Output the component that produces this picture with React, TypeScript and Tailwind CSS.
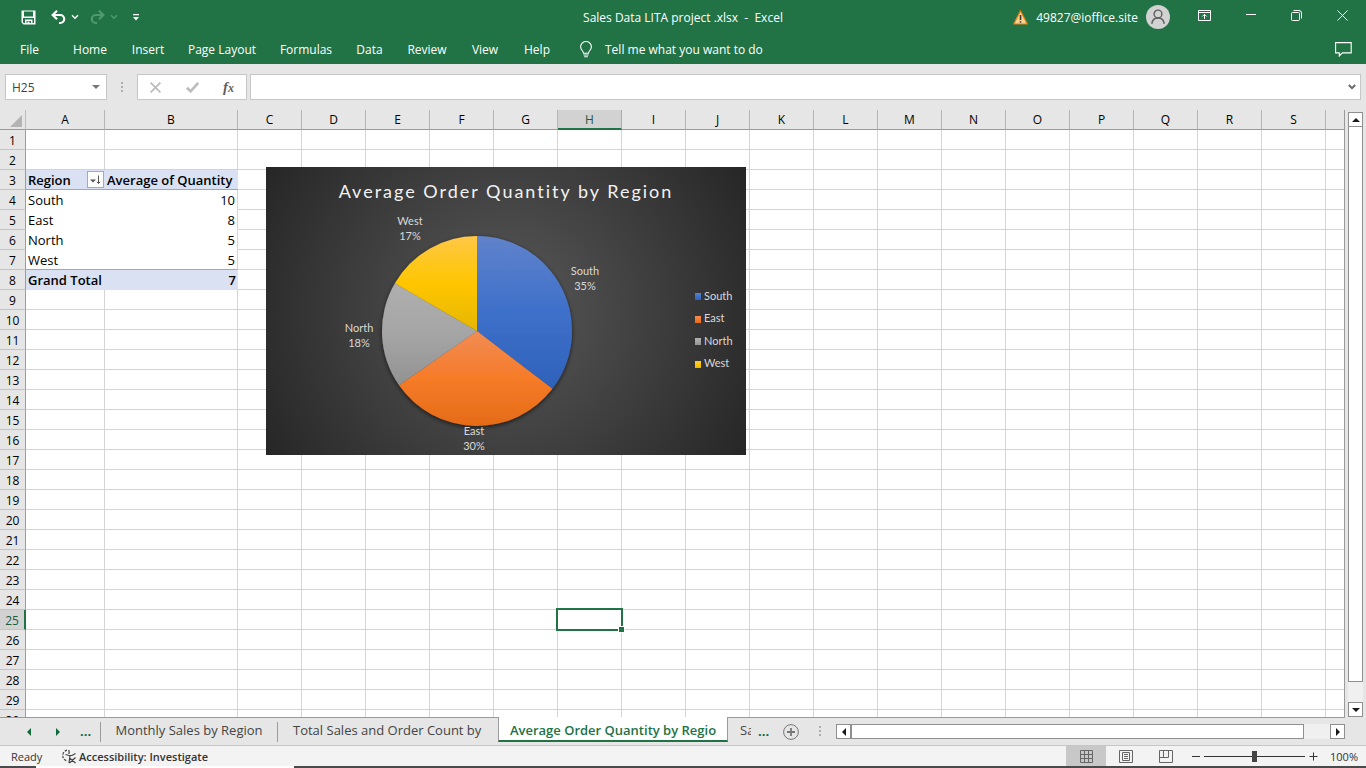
import React, { useEffect, useState } from "react";

const LETTERS = "ABCDEFGHIJKLMNOPQRSTUVWXYZ".split("");
const SELECTED = { col: "H", row: 25 };

const PIVOT: Record<number, [string, string]> = {
  3: ["Region", "Average of Quantity"],
  4: ["South", "10"],
  5: ["East", "8"],
  6: ["North", "5"],
  7: ["West", "5"],
  8: ["Grand Total", "7"],
};

const MENU = [
  { name: "Home", width: "w-[60px]" },
  { name: "Insert", width: "w-[56px]" },
  { name: "Page Layout", width: "w-[92px]" },
  { name: "Formulas", width: "w-[76px]" },
  { name: "Data", width: "w-[51px]" },
  { name: "Review", width: "w-[64px]" },
  { name: "View", width: "w-[52px]" },
  { name: "Help", width: "w-[52px]" },
];

/** Number of rows and columns needed to fill the window. */
function useVisibleCells() {
  const measure = () => ({
    rows: Math.max(1, Math.ceil((window.innerHeight - 181) / 20)),
    cols: Math.max(2, 2 + Math.ceil((window.innerWidth - 260) / 64)),
  });
  const [cells, setCells] = useState(measure);
  useEffect(() => {
    const update = () => setCells(measure());
    window.addEventListener("resize", update);
    return () => window.removeEventListener("resize", update);
  }, []);
  return cells;
}

function columnName(i: number) {
  return i < 26 ? LETTERS[i] : LETTERS[Math.floor(i / 26) - 1] + LETTERS[i % 26];
}

function Chevron({ className = "" }: { className?: string }) {
  return (
    <svg width="8" height="6" viewBox="0 0 8 6" fill="none" stroke="currentColor" strokeWidth="1.4" className={className}>
      <path d="M1 1.3 4 4.2 7 1.3" />
    </svg>
  );
}

function TitleBar() {
  return (
    <header className="grid h-[34px] grid-cols-[1fr_auto_1fr] items-center text-white">
      <div className="flex h-full items-center pl-[21px]">
        <button aria-label="Save" className="mr-[15px]">
          <svg width="15" height="15" viewBox="0 0 15 15" fill="#fff" fillRule="evenodd">
            <path d="M.5.500h14v14h-12l-2-2zM3 1.500v5h9v-5zM2 8v4.500l.8.500H4V9.500h7.500V13H13V8zM5.500 11v2h1v-1.500h2V13H10v-2z" />
          </svg>
        </button>
        <button aria-label="Undo">
          <svg width="15" height="15" viewBox="0 0 15 15" fill="none" stroke="#fff" strokeWidth="2.200">
            <path d="M6 .8 1.700 5 6 9.200" />
            <path d="M2 5h7.200a3.900 3.900 0 0 1 0 8H8" />
          </svg>
        </button>
        <button aria-label="Undo history" className="ml-[5px]"><Chevron /></button>
        <button aria-label="Redo" className="ml-[11px] text-[#4f9a6e]">
          <svg width="15" height="15" viewBox="0 0 15 15" fill="none" stroke="currentColor" strokeWidth="2.200">
            <path d="M9 .8 13.300 5 9 9.200" />
            <path d="M13 5H5.800a3.900 3.900 0 0 0 0 8H7" />
          </svg>
        </button>
        <button aria-label="Redo history" className="ml-[5px] text-[#4f9a6e]"><Chevron /></button>
        <button aria-label="Customize Quick Access Toolbar" className="ml-[15px]">
          <svg width="6" height="7" viewBox="0 0 6 7" fill="#fff">
            <path d="M0 0h6v1.200H0zM0 3h6L3 6.400z" />
          </svg>
        </button>
      </div>
      <h1 className="pt-[2px] text-[12px] leading-4 whitespace-pre">Sales Data LITA project .xlsx  -  Excel</h1>
      <div className="flex h-full items-center justify-end pr-[18px]">
        <svg width="15" height="15" viewBox="0 0 15 15" className="mr-2">
          <path d="M7.500.8 14.300 14H.7z" fill="#fbd38a" stroke="#e07b14" strokeWidth="1.200" />
          <path d="M7.500 5v5M7.500 11.200v1.600" stroke="#3a3a3a" strokeWidth="1.600" />
        </svg>
        <span className="mr-2 pt-[2px] text-[12px] leading-4">49827@ioffice.site</span>
        <button aria-label="Account" className="mr-[28px] rounded-full bg-[#d2d2d2]">
          <svg width="24" height="24" viewBox="0 0 24 24" fill="none" stroke="#5f5f5f" strokeWidth="1.400">
            <circle cx="12" cy="9" r="3.900" />
            <path d="M5.800 18.800c.4-3.600 2.600-5.800 6.200-5.800s5.800 2.200 6.200 5.800" />
          </svg>
        </button>
        <button aria-label="Ribbon Display Options" className="mr-[35px] -mt-1">
          <svg width="13" height="11" viewBox="0 0 13 11" fill="none" stroke="#fff">
            <path d="M.5.500h12v10H.500zM.5 2.500h12M6.500 9V4.500M4.300 6.500l2.200-2.200 2.200 2.200" />
          </svg>
        </button>
        <button aria-label="Minimize" className="mr-[35px] -mt-1">
          <svg width="10" height="10" viewBox="0 0 10 10" stroke="#fff"><path d="M0 4.500h10" /></svg>
        </button>
        <button aria-label="Restore" className="mr-[35px] -mt-1">
          <svg width="11" height="11" viewBox="0 0 11 11" fill="none" stroke="#fff">
            <rect x=".5" y="2.500" width="8" height="8" rx="1" />
            <path d="M2.500.500H8a2.500 2.500 0 0 1 2.500 2.500v5.500" />
          </svg>
        </button>
        <button aria-label="Close" className="-mt-1">
          <svg width="11" height="11" viewBox="0 0 11 11" stroke="#fff"><path d="M.5.500l10 10M10.500.500l-10 10" /></svg>
        </button>
      </div>
    </header>
  );
}

function MenuBar() {
  return (
    <nav className="flex h-[30px] items-center pr-[14px] pl-px text-[12px] leading-4 text-white">
      <button className="w-[57px] pt-px">File</button>
      <div className="w-[2px]" />
      {MENU.map((m) => (
        <button key={m.name} className={`${m.width} pt-px whitespace-nowrap`}>{m.name}</button>
      ))}
      <button className="ml-[17px] flex items-center gap-[13px]">
        <svg width="12" height="17" viewBox="0 0 12 17" fill="none" stroke="#fff" strokeWidth="1.100">
          <path d="M3.500 12.300C3.500 9.800.6 9 .6 5.700a5.300 5.100 0 0 1 10.800 0C11.400 9 8.500 9.800 8.500 12.300zM3.500 14h5M4.200 15.800h3.600" />
        </svg>
        <span className="pt-px">Tell me what you want to do</span>
      </button>
      <button aria-label="Comments" className="ml-auto">
        <svg width="17" height="15" viewBox="0 0 17 15" fill="none" stroke="#fff" strokeWidth="1.100">
          <path d="M.6.600h15.600v10.300H7.400L4.300 14v-3.100H.600z" />
        </svg>
      </button>
    </nav>
  );
}

function Dots() {
  return (
    <svg width="2" height="11" viewBox="0 0 2 11" fill="#adadad">
      <path d="M0 0h2v2H0zM0 4h2v2H0zM0 8h2v2H0z" />
    </svg>
  );
}

function FormulaBar() {
  return (
    <div className="flex h-[46px] items-center pr-[5px] pl-[5px]">
      <div className="flex h-[26px] w-[102px] items-center border border-[#c6c6c6] bg-white pr-[6px]">
        <input aria-label="Name Box" defaultValue="H25" className="w-0 flex-1 bg-transparent pt-px pl-[6px] text-[12px] text-[#444] outline-none" />
        <button aria-label="Open name list">
          <svg width="8" height="4" viewBox="0 0 8 4" fill="#777"><path d="M0 0h8L4 4z" /></svg>
        </button>
      </div>
      <div className="mx-[14px]"><Dots /></div>
      <div className="flex h-[26px] w-[110px] items-center justify-between border border-[#c6c6c6] bg-white pr-[12px] pl-[12px]">
        <button aria-label="Cancel">
          <svg width="11" height="11" viewBox="0 0 11 11" stroke="#bcbcbc" strokeWidth="1.800"><path d="M.6.600l9.800 9.800M10.400.600.600 10.400" /></svg>
        </button>
        <button aria-label="Enter">
          <svg width="13" height="11" viewBox="0 0 13 11" fill="none" stroke="#bcbcbc" strokeWidth="2.600"><path d="M.9 5.800 4.600 9.300 12.200 1" /></svg>
        </button>
        <button aria-label="Insert Function" className="font-['Liberation_Serif',serif] text-[15px] leading-4 font-bold text-[#5f5f5f] italic">
          f<span className="text-[12px]">x</span>
        </button>
      </div>
      <div className="ml-[3px] flex h-[26px] flex-1 items-center border border-[#c6c6c6] bg-white pr-1">
        <input aria-label="Formula Bar" className="h-full flex-1 bg-transparent px-2 text-[12px] outline-none" />
        <button aria-label="Expand Formula Bar" className="text-[#6a6a6a]">
          <svg width="8" height="6" viewBox="0 0 8 6" fill="none" stroke="currentColor" strokeWidth="2"><path d="M.8 1 4 4.200 7.200 1" /></svg>
        </button>
      </div>
    </div>
  );
}

function PivotFilter() {
  return (
    <button aria-label="Filter Region" className="mr-px flex size-[17px] items-center justify-center border border-[#a9a9a9] bg-[#fdfdfd]">
      <svg width="11" height="10" viewBox="0 0 11 10" fill="none">
        <path d="M0 4.500h6L3 7.500z" fill="#555" />
        <path d="M8.500.500v8M6.800 6.800l1.700 1.700 1.700-1.700" stroke="#555" />
      </svg>
    </button>
  );
}

function cellClass(col: string, row: number) {
  const base = "relative h-5 p-0 border-b whitespace-nowrap";
  if ((col === "A" || col === "B") && row >= 3 && row <= 8) {
    if (row === 3) return `${base} border-[#8ea9db] bg-[#d9e1f2] font-semibold`;
    if (row === 8) return `${base} border-[#d9e1f2] bg-[#d9e1f2] font-semibold`;
    const bottom = row === 7 ? "border-b-[#8ea9db]" : "border-b-white";
    const right = col === "B" ? "border-r border-r-[#d4d4d4]" : "";
    return `${base} ${bottom} ${right}`;
  }
  return `${base} border-r border-[#d4d4d4]`;
}

function Sheet() {
  const visible = useVisibleCells();
  const columns = Array.from({ length: visible.cols }, (_, i) => columnName(i));
  const rows = Array.from({ length: visible.rows }, (_, i) => i + 1);
  return (
    <table className="w-px table-fixed border-separate border-spacing-0 bg-white text-[13px] text-black">
      <colgroup>
        <col className="w-[26px]" />
        {columns.map((c) => (
          <col key={c} className={c === "A" ? "w-[79px]" : c === "B" ? "w-[133px]" : "w-[64px]"} />
        ))}
      </colgroup>
      <thead className="text-[12px]">
        <tr>
          <th aria-label="Select All" className="h-5 border-r border-b border-[#9b9b9b] border-r-[#bcbcbc] bg-[#e6e6e6] p-0">
            <svg width="12" height="12" viewBox="0 0 12 12" className="mt-[2px] ml-[10px]"><path d="M12 0v12H0z" fill="#b4b4b4" /></svg>
          </th>
          {columns.map((c, i) => (
            <th
              key={c}
              className={
                c === SELECTED.col
                  ? "h-5 border-r border-b-2 border-r-[#ababab] border-b-[#217346] bg-[#d2d2d2] p-0 pt-px leading-[17px] font-normal text-[#215c3b]"
                  : "h-5 border-r border-b border-r-[#b5b5b5] border-b-[#9b9b9b] bg-[#e6e6e6] p-0 leading-[19px] font-normal"
              }
            >
              {i < columns.length - 1 && c}
            </th>
          ))}
        </tr>
      </thead>
      <tbody>
        {rows.map((r) => (
          <tr key={r}>
            <th
              className={
                r === SELECTED.row
                  ? "h-5 border-r-2 border-b border-r-[#217346] border-b-[#c4c4c4] bg-[#d2d2d2] p-0 pt-[2px] text-[12px] leading-[17px] font-normal text-[#215c3b]"
                  : "h-5 border-r border-b border-r-[#9b9b9b] border-b-[#c4c4c4] bg-[#e6e6e6] p-0 pt-[2px] text-[12px] leading-[17px] font-normal"
              }
            >
              {r}
            </th>
            {columns.map((c) => {
              const pivot = PIVOT[r];
              return (
                <td key={c} className={cellClass(c, r)}>
                  {pivot && c === "A" && (
                    <div className="flex h-[19px] items-center justify-between pl-[2px]">
                      <span className="pt-px leading-[18px]">{pivot[0]}</span>
                      {r === 3 && <PivotFilter />}
                    </div>
                  )}
                  {pivot && c === "B" && (
                    <div className={r === 3 ? "h-[19px] pt-px pl-[2px] leading-[18px]" : "h-[19px] pt-px pr-[2px] text-right leading-[18px]"}>
                      {pivot[1]}
                    </div>
                  )}
                  {c === SELECTED.col && r === SELECTED.row && (
                    <div className="absolute -top-[2px] -right-[2px] -bottom-[2px] -left-[2px] z-10 border-2 border-[#217346]">
                      <span className="absolute -right-[4px] -bottom-[4px] size-[7px] border border-white bg-[#217346]" />
                    </div>
                  )}
                </td>
              );
            })}
          </tr>
        ))}
      </tbody>
    </table>
  );
}

const CX = 211;
const CY = 164;
const R = 95;
const SLICES = [
  { name: "South", pct: "35%", from: 0, to: 127.5, stops: ["#6083cb", "#3e70ca", "#2e61ba"], x: 319, y: 108 },
  { name: "East", pct: "30%", from: 127.5, to: 235.1, stops: ["#f18c55", "#f67b28", "#e56b17"], x: 208, y: 268 },
  { name: "North", pct: "18%", from: 235.1, to: 300.2, stops: ["#afafaf", "#a5a5a5", "#929292"], x: 93, y: 165 },
  { name: "West", pct: "17%", from: 300.2, to: 360, stops: ["#ffc746", "#ffc600", "#e5b600"], x: 144, y: 58 },
];

function point(deg: number) {
  const a = (deg * Math.PI) / 180;
  return `${(CX + R * Math.sin(a)).toFixed(2)} ${(CY - R * Math.cos(a)).toFixed(2)}`;
}

function PieChart() {
  return (
    <svg width="480" height="288" viewBox="0 0 480 288" role="img" aria-label="Average Order Quantity by Region" className="font-['Lato',sans-serif]">
      <defs>
        <radialGradient id="backdrop" gradientUnits="userSpaceOnUse" cx="240" cy="144" r="280">
          <stop offset="0" stopColor="#595959" />
          <stop offset="1" stopColor="#262626" />
        </radialGradient>
        {SLICES.map((s) => (
          <linearGradient key={s.name} id={`fill-${s.name}`} x1="0" y1="0" x2="0" y2="1">
            <stop offset="0" stopColor={s.stops[0]} />
            <stop offset=".5" stopColor={s.stops[1]} />
            <stop offset="1" stopColor={s.stops[2]} />
          </linearGradient>
        ))}
        <filter id="shadow" x="-10%" y="-10%" width="120%" height="120%">
          <feDropShadow dx="0" dy="1.500" stdDeviation="2" floodColor="#000" floodOpacity=".63" />
        </filter>
      </defs>
      <rect width="480" height="288" fill="url(#backdrop)" />
      <text x="240" y="31" textAnchor="middle" fill="#f2f2f2" className="text-[18px] tracking-[2px]">
        Average Order Quantity by Region
      </text>
      <g filter="url(#shadow)">
        {SLICES.map((s) => (
          <path key={s.name} d={`M${CX} ${CY}L${point(s.from)}A${R} ${R} 0 0 1 ${point(s.to)}Z`} fill={`url(#fill-${s.name})`} />
        ))}
      </g>
      <g fill="#d9d9d9" textAnchor="middle" className="text-[11px]">
        {SLICES.map((s) => (
          <React.Fragment key={s.name}>
            <text x={s.x} y={s.y}>{s.name}</text>
            <text x={s.x} y={s.y + 15}>{s.pct}</text>
          </React.Fragment>
        ))}
      </g>
      <g className="text-[11px]">
        {SLICES.map((s, i) => (
          <React.Fragment key={s.name}>
            <rect x="429" y={126 + Math.round(i * 22.6)} width="6" height="7" fill={`url(#fill-${s.name})`} />
            <text x="438" y={133 + Math.round(i * 22.4)} fill="#d9d9d9">{s.name}</text>
          </React.Fragment>
        ))}
      </g>
    </svg>
  );
}

function Arrow({ dir, color = "#1a1a1a" }: { dir: "up" | "down" | "left" | "right"; color?: string }) {
  const d = { up: "M0 6 4 2l4 4z", down: "M0 2h8L4 6z", left: "M6 0v8L2 4z", right: "M2 0v8l4-4z" }[dir];
  return <svg width="8" height="8" viewBox="0 0 8 8" fill={color}><path d={d} /></svg>;
}

const SCROLL_BUTTON = "flex size-[15px] shrink-0 items-center justify-center border border-[#8f8f8f] bg-white";

function VerticalScroll() {
  return (
    <div className="flex w-[21px] shrink-0 flex-col items-center pt-[2px] pl-[3px] pr-[3px]">
      <button aria-label="Scroll up" className={SCROLL_BUTTON}><Arrow dir="up" /></button>
      <div className="flex w-[15px] flex-1 flex-col bg-[#f0f0f0] pb-[20px]">
        <div className="flex-1 border border-t-0 border-[#8f8f8f] bg-white" />
      </div>
      <button aria-label="Scroll down" className={SCROLL_BUTTON}><Arrow dir="down" /></button>
    </div>
  );
}

function SheetTabs() {
  return (
    <div className="flex h-[29px] shrink-0 border-b border-[#c6c6c6] text-[13px] leading-[24px] text-[#444]">
      <div className="flex w-[101px] items-center border-t border-[#9b9b9b] pl-[25px]">
        <button aria-label="Previous sheet"><Arrow dir="left" color="#0e6b38" /></button>
        <button aria-label="Next sheet" className="ml-[21px]"><Arrow dir="right" color="#0e6b38" /></button>
        <button aria-label="Previous sheets" className="ml-[18px] pb-[2px] font-bold text-[#0e6b38]">...</button>
        <span className="ml-auto h-5 w-px bg-[#9b9b9b]" />
      </div>
      <div className="flex w-[177px] items-center border-t border-[#9b9b9b]">
        <button className="flex-1 pb-[3px] whitespace-nowrap">Monthly Sales by Region</button>
        <span className="h-5 w-px bg-[#9b9b9b]" />
      </div>
      <button className="w-[220px] border-t border-[#9b9b9b] pb-[3px] pl-[15px] text-left whitespace-nowrap">Total Sales and Order Count by</button>
      <button className="mb-[3px] w-[230px] overflow-hidden border-x border-b-2 border-x-[#9b9b9b] border-b-[#217346] bg-white pt-[3px] leading-[21px] font-semibold whitespace-nowrap text-[#217346]">
        Average Order Quantity by Regio
      </button>
      <div className="flex flex-1 items-center border-t border-[#9b9b9b] pl-3">
        <button className="w-[11px] overflow-hidden pb-[3px] text-left whitespace-nowrap">Sa</button>
        <button aria-label="More sheets" className="ml-[7px] pb-[2px] font-bold text-[#0e6b38]">...</button>
        <button aria-label="New sheet" className="ml-[14px]">
          <svg width="16" height="16" viewBox="0 0 16 16" fill="none" stroke="#777">
            <circle cx="8" cy="8" r="7.400" />
            <path d="M4 8h8M8 4v8" strokeWidth="1.800" />
          </svg>
        </button>
        <div className="ml-5"><Dots /></div>
        <div className="ml-[15px] flex flex-1 bg-[#f0f0f0]">
          <button aria-label="Scroll left" className={SCROLL_BUTTON}><Arrow dir="left" /></button>
          <div className="mr-[26px] h-[15px] flex-1 border border-[#8f8f8f] bg-white" />
          <button aria-label="Scroll right" className={SCROLL_BUTTON}><Arrow dir="right" /></button>
        </div>
      </div>
      <div className="w-[21px]" />
    </div>
  );
}

function StatusBar() {
  return (
    <footer className="flex h-5 shrink-0 items-center bg-[#f3f3f3] text-[11px] leading-4 text-[#333]">
      <span className="w-[61px] pt-[2px] pl-[11px]">Ready</span>
      <button className="flex items-center gap-[2px] font-semibold">
        <svg width="16" height="15" viewBox="0 0 16 15" fill="none" stroke="#444" strokeWidth="1.200">
          <path d="M6 1.200A5.500 5.500 0 0 0 6.500 12" strokeDasharray="2.500 1.200" />
          <path d="M8 1v4M4.500 5.500 8 6.500h3l3.500-2M9 6.500l-1 7.500M8.500 9l6 5M14.500 8.500 8.500 14" />
        </svg>
        <span className="pt-[2px]">Accessibility: Investigate</span>
      </button>
      <div className="ml-auto flex h-full items-center">
        <button aria-label="Normal view" className="flex h-full w-10 items-center justify-center bg-[#c8c8c8]">
          <svg width="13" height="13" viewBox="0 0 13 13" fill="none" stroke="#666"><path d="M.5.500h12v12H.500zM4.500 0v13M8.500 0v13M0 4.500h13M0 8.500h13" /></svg>
        </button>
        <button aria-label="Page Layout view" className="flex h-full w-10 items-center justify-center">
          <svg width="14" height="13" viewBox="0 0 14 13" fill="none" stroke="#666"><path d="M.5.500h13v12H.500zM3.500 2.500h7v8h-7zM5 4.500h4M5 6.500h4M5 8.500h4" /></svg>
        </button>
        <button aria-label="Page Break Preview" className="flex h-full w-10 items-center justify-center">
          <svg width="14" height="13" viewBox="0 0 14 13" fill="none" stroke="#666"><path d="M.5.500h13v12H.500zM4.500.500v7M9.500.500v7M.5 7.500h9" /></svg>
        </button>
        <button aria-label="Zoom out" className="ml-[5px]">
          <svg width="9" height="9" viewBox="0 0 9 9" stroke="#333"><path d="M1 4.500h8" /></svg>
        </button>
        <input
          type="range"
          aria-label="Zoom"
          min="10"
          max="190"
          defaultValue="100"
          className="mx-1 h-3 w-[101px] appearance-none bg-[linear-gradient(#333,#333)] bg-[length:100%_1px] bg-center bg-no-repeat [&::-webkit-slider-thumb]:h-[11px] [&::-webkit-slider-thumb]:w-[5px] [&::-webkit-slider-thumb]:appearance-none [&::-webkit-slider-thumb]:bg-[#444]"
        />
        <button aria-label="Zoom in">
          <svg width="9" height="9" viewBox="0 0 9 9" stroke="#333"><path d="M.5 4.500h8M4.500.500v8" /></svg>
        </button>
        <button className="w-12 pt-px pr-2 text-right">100%</button>
      </div>
    </footer>
  );
}

export default function App() {
  return (
    <div className="flex h-screen flex-col overflow-hidden bg-[#e6e6e6] font-['Open_Sans',sans-serif]">
      <div className="shrink-0 bg-[#217346]">
        <TitleBar />
        <MenuBar />
      </div>
      <div className="shrink-0"><FormulaBar /></div>
      <main className="flex min-h-0 flex-1">
        <div className="relative min-w-0 flex-1 overflow-hidden border-r border-[#9b9b9b]">
          <Sheet />
          <div className="absolute top-[57px] left-[266px]"><PieChart /></div>
        </div>
        <VerticalScroll />
      </main>
      <SheetTabs />
      <StatusBar />
      <div className="flex h-[2px] shrink-0 bg-[#4a4a4a] pl-9">
        <div className="w-[258px] bg-white" />
      </div>
    </div>
  );
}
